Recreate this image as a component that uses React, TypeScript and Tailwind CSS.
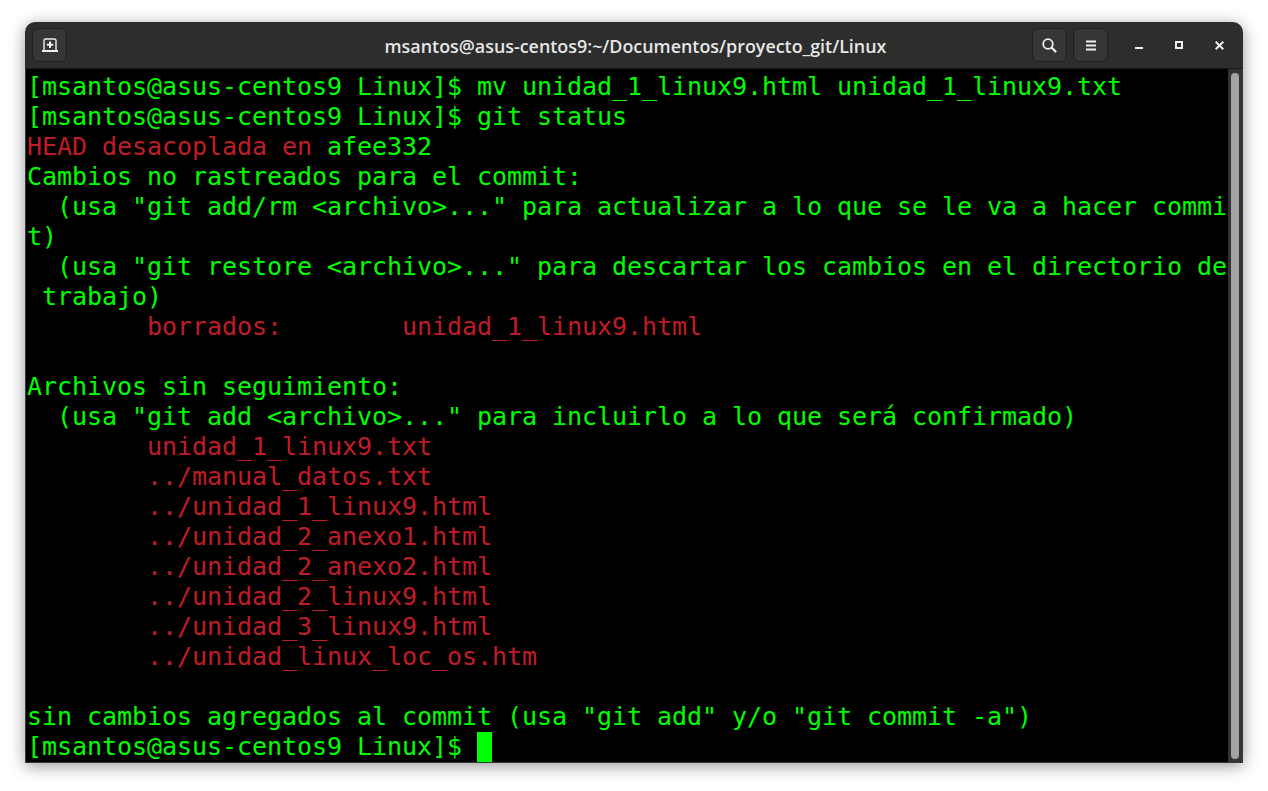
import React from 'react';

type Line = { text: string; red?: boolean; tail?: string };

const lines: Line[] = [
  { text: '[msantos@asus-centos9 Linux]$ mv unidad_1_linux9.html unidad_1_linux9.txt' },
  { text: '[msantos@asus-centos9 Linux]$ git status' },
  { text: 'HEAD desacoplada en ', red: true, tail: 'afee332' },
  { text: 'Cambios no rastreados para el commit:' },
  { text: '  (usa "git add/rm <archivo>..." para actualizar a lo que se le va a hacer commi' },
  { text: 't)' },
  { text: '  (usa "git restore <archivo>..." para descartar los cambios en el directorio de' },
  { text: ' trabajo)' },
  { text: '        borrados:        unidad_1_linux9.html', red: true },
  { text: '' },
  { text: 'Archivos sin seguimiento:' },
  { text: '  (usa "git add <archivo>..." para incluirlo a lo que será confirmado)' },
  { text: '        unidad_1_linux9.txt', red: true },
  { text: '        ../manual_datos.txt', red: true },
  { text: '        ../unidad_1_linux9.html', red: true },
  { text: '        ../unidad_2_anexo1.html', red: true },
  { text: '        ../unidad_2_anexo2.html', red: true },
  { text: '        ../unidad_2_linux9.html', red: true },
  { text: '        ../unidad_3_linux9.html', red: true },
  { text: '        ../unidad_linux_loc_os.htm', red: true },
  { text: '' },
  { text: 'sin cambios agregados al commit (usa "git add" y/o "git commit -a")' },
];

const HeaderButton: React.FC<{ children: React.ReactNode }> = ({ children }) => (
  <button className="flex h-[34px] w-[35px] items-center justify-center rounded-[6px] border border-[#1f1f1f] bg-[#363636]">
    {children}
  </button>
);

const App: React.FC = () => {
  return (
    <div className="h-[791px] w-[1268px] overflow-hidden bg-white pl-[25px] pt-[22px]">
      <div className="flex h-[741px] w-[1218px] flex-col overflow-hidden rounded-t-[10px] shadow-[0_3px_16px_rgba(0,0,0,0.42)]">
        <header className="flex h-[47px] shrink-0 items-center border-b border-[#1c1c1c] bg-[#2d2d2d]">
          <div className="flex flex-1 basis-0 items-center pl-[7px]">
            <HeaderButton>
              <svg width="16" height="14" viewBox="0 0 16 14" fill="none" stroke="#eeeeee">
                <path d="M2 13V2.5A1.5 1.5 0 0 1 3.5 1h9A1.5 1.5 0 0 1 14 2.5V13" strokeWidth="1.4" />
                <path d="M0 13h16" strokeWidth="2" />
                <path d="M8 3.5v6.5M4.8 6.8h6.4" strokeWidth="2" />
              </svg>
            </HeaderButton>
          </div>
          <div className="pt-[3px] font-['Open_Sans',sans-serif] text-[17.9px] font-semibold text-[#e6e6e6]">
            msantos@asus-centos9:~/Documentos/proyecto_git/Linux
          </div>
          <div className="flex flex-1 basis-0 items-center justify-end pr-[4px]">
            <div className="flex items-center gap-[6px]">
              <HeaderButton>
                <svg width="15" height="15" viewBox="0 0 15 15" fill="none" stroke="#eeeeee" strokeWidth="1.8">
                  <circle cx="6" cy="6" r="4.8" />
                  <path d="M9.5 9.5l4.6 4.6" strokeWidth="2.2" />
                </svg>
              </HeaderButton>
              <HeaderButton>
                <svg width="12" height="11" viewBox="0 0 12 11" fill="#eeeeee">
                  <rect x="1" y="0.5" width="10" height="2" />
                  <rect x="1" y="4.5" width="10" height="2" />
                  <rect x="1" y="8.5" width="10" height="2" />
                </svg>
              </HeaderButton>
            </div>
            <div className="ml-[11px] flex items-center">
              <button className="flex h-[34px] w-[40px] items-center justify-center">
                <span className="mt-[6px] block h-[2px] w-[8px] bg-[#eeeeee]" />
              </button>
              <button className="flex h-[34px] w-[40px] items-center justify-center">
                <span className="block h-[8px] w-[8px] border-2 border-[#eeeeee]" />
              </button>
              <button className="flex h-[34px] w-[40px] items-center justify-center">
                <svg width="9" height="9" viewBox="0 0 9 9" stroke="#eeeeee" strokeWidth="2">
                  <path d="M0.7 0.7l7.6 7.6M8.3 0.7l-7.6 7.6" />
                </svg>
              </button>
            </div>
          </div>
        </header>
        <div className="flex min-h-0 flex-1 border-x border-b border-[#3a3a3a] bg-black">
          <div className="min-w-0 flex-1 overflow-hidden whitespace-pre pl-[1px] pt-[3px] font-['DejaVu_Sans_Mono',monospace] text-[25px] leading-[30px] tracking-[-0.05px] text-[#00ff00]">
            {lines.map((line, i) => (
              <div key={i} className="h-[30px]">
                <span className={line.red ? 'text-[#c01c28]' : undefined}>{line.text}</span>
                {line.tail}
              </div>
            ))}
            <div className="flex h-[30px]">
              <span>{'[msantos@asus-centos9 Linux]$ '}</span>
              <span className="h-[30px] w-[15px] bg-[#00ff00]" />
            </div>
          </div>
          <div className="w-[14px] shrink-0 bg-[#333333] pb-[3px] pl-[3px] pr-[2px] pt-[4px]">
            <div className="h-full w-[8px] rounded-full bg-[#a3a3a3]" />
          </div>
        </div>
      </div>
    </div>
  );
};

export default App;
